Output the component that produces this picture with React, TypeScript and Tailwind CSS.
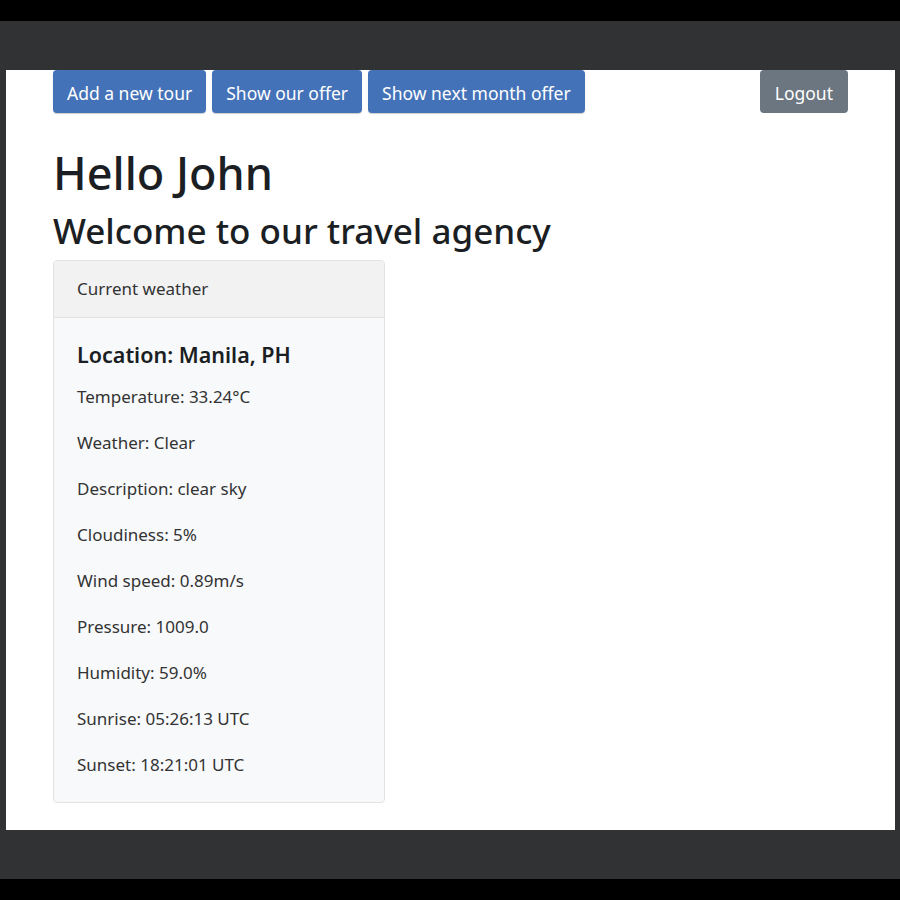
const rows = [
  "Temperature: 33.24°C",
  "Weather: Clear",
  "Description: clear sky",
  "Cloudiness: 5%",
  "Wind speed: 0.89m/s",
  "Pressure: 1009.0",
  "Humidity: 59.0%",
  "Sunrise: 05:26:13 UTC",
  "Sunset: 18:21:01 UTC",
];

function NavButton({ label }: { label: string }) {
  return (
    <button className="h-[43px] rounded-[4px] bg-[#4472b8] px-[14px] pt-[4px] text-[17.5px] text-white shadow-[0_1px_1px_rgba(0,0,0,0.2)]">
      {label}
    </button>
  );
}

export default function App() {
  return (
    <div
      className="flex h-[900px] w-[900px] flex-col bg-black"
      style={{ fontFamily: '"Noto Sans", "Open Sans", sans-serif' }}
    >
      <div className="h-[21px] bg-black" />
      <div className="h-[49px] bg-[#313234]" />

      <div className="flex h-[760px] bg-[#313234]">
        <div className="w-[6px]" />
        <div className="flex-1 bg-white pl-[47px] pr-[47px]">
          {/* top buttons */}
          <div className="flex items-start">
            <div className="flex gap-[6px]">
              <NavButton label="Add a new tour" />
              <NavButton label="Show our offer" />
              <NavButton label="Show next month offer" />
            </div>
            <button className="ml-auto h-[43px] rounded-[4px] bg-[#6c7680] px-[15px] pt-[4px] text-[17.5px] text-white">
              Logout
            </button>
          </div>

          <h1 className="mt-[35px] text-[45px] font-medium leading-[50px] text-[#1b1e22]">
            Hello John
          </h1>
          <h2 className="mt-[10px] text-[35px] font-medium leading-[46px] text-[#1b1e22]">
            Welcome to our travel agency
          </h2>

          {/* weather card */}
          <div className="mt-[6px] w-[332px] overflow-hidden rounded-[4px] border border-[#e2e3e5] bg-[#f8f9fb]">
            <div className="flex h-[57px] items-center border-b border-[#e2e3e5] bg-[#f2f2f3] px-[23px] text-[17px] text-[#333]">
              Current weather
            </div>
            <div className="px-[23px] pb-[14px] pt-[22px]">
              <h5 className="text-[21.5px] font-semibold leading-[30px] text-[#1b1e22]">
                Location: Manila, PH
              </h5>
              <div className="mt-[4px] flex flex-col">
                {rows.map((r) => (
                  <p key={r} className="h-[46px] text-[17px] leading-[46px] text-[#333]">
                    {r}
                  </p>
                ))}
              </div>
            </div>
          </div>
        </div>
        <div className="w-[5px]" />
      </div>

      <div className="h-[49px] bg-[#313234]" />
      <div className="flex-1 bg-black" />
    </div>
  );
}
